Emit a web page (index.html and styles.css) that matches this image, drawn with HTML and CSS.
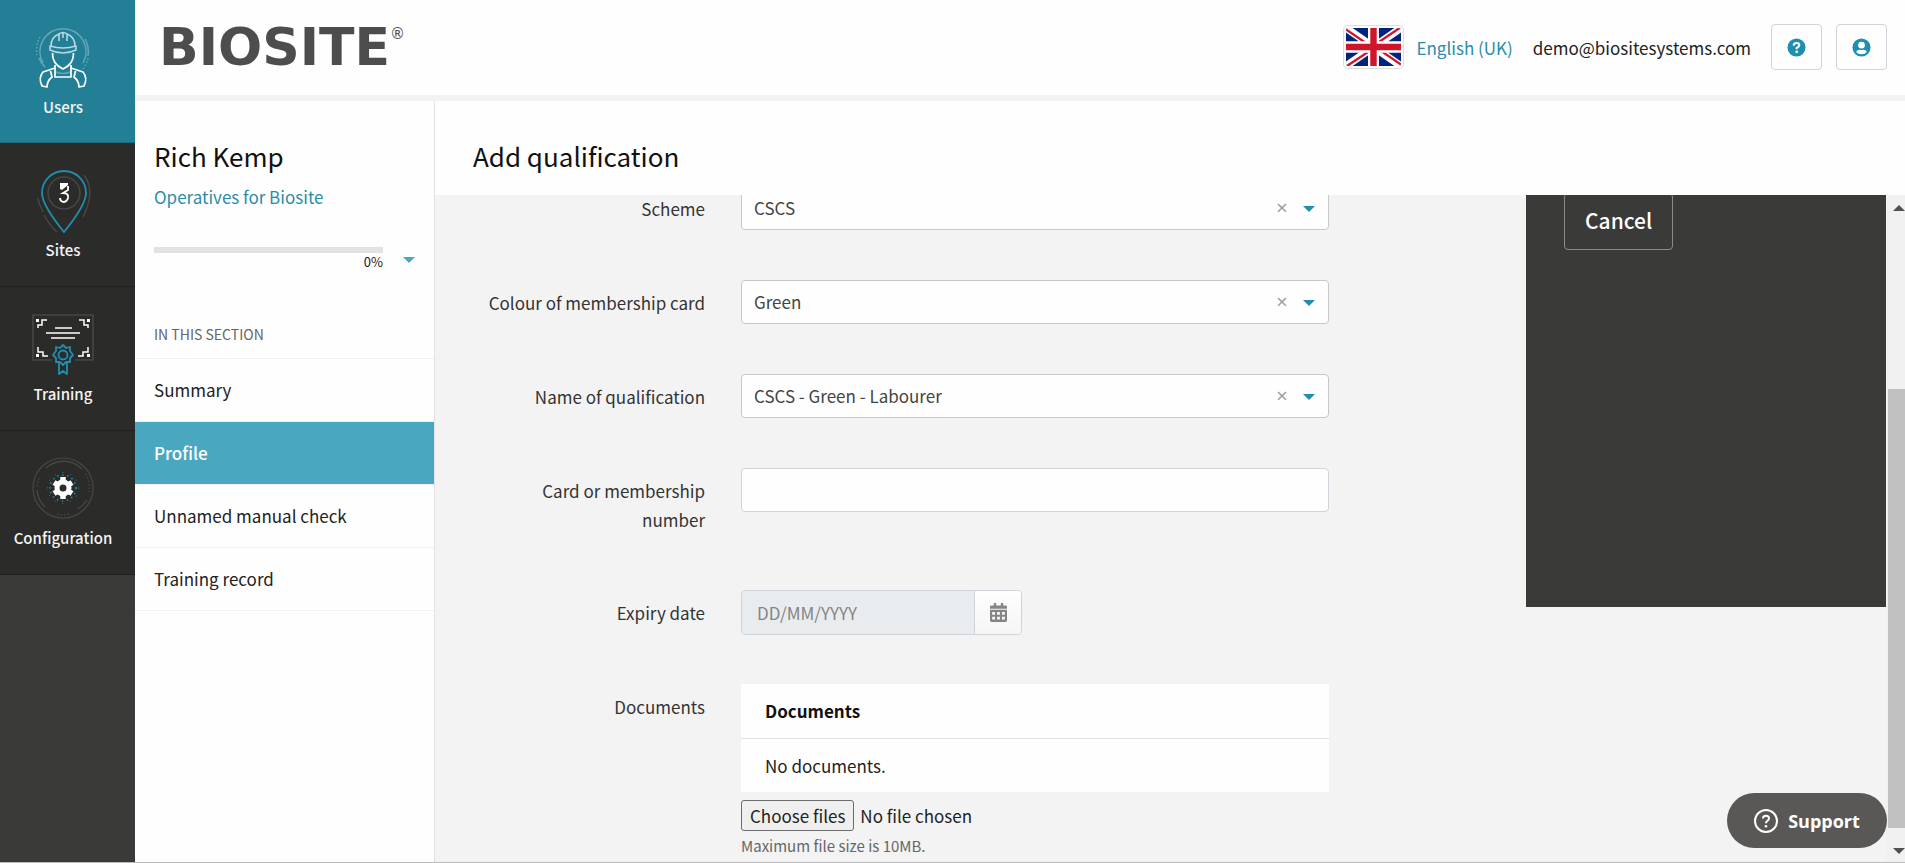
FILE: index.html
```html
<!DOCTYPE html>
<html lang="en">
<head>
    <meta charset="UTF-8">
    <meta name="viewport" content="width=device-width, initial-scale=1.0">
    <title>Add qualification - Biosite</title>

    <link rel="stylesheet" href="styles.css">
</head>

<body>
    <!-- Main navigation -->
    <nav class="main-nav">
        <a href="#" class="nav-item active">
            <svg class="nav-icon" viewBox="0 0 64 64" fill="none" stroke="#fff">
                <g stroke-width="1.5" opacity="0.3">
                    <path d="M12 37A23 23 0 1 1 52 37"/>
                    <path d="M54 13A26 26 0 0 1 57 30"/>
                    <path d="M8 32A26 26 0 0 0 14 41"/>
                    <path d="M9 11A27 27 0 0 0 6 29M57 32A27 27 0 0 1 51 44" stroke-dasharray="1.5 2"/>
                    <path d="M25 46Q32 49 39 46"/>
                </g>
                <g stroke="#b5d8e2" stroke-width="1.6" stroke-linejoin="round">
                    <path d="M20 20Q20 11 28 8M44 20Q44 11 36 8M28 15V8Q32 5 36 8V15M32 7V12"/>
                    <path d="M19 20Q32 24 45 20V24Q32 30 19 24Z"/>
                </g>
                <g stroke-width="1.7" stroke-linejoin="round">
                    <path d="M21.500 27Q21 38 32 43Q43 38 42.500 27"/>
                    <path d="M24 39V42L12 46Q7 52 11 60L16 61Q16 55 21 51L19 43M40 39V42L52 46Q57 52 53 60L48 61Q48 55 43 51L45 43"/>
                    <path d="M24 42V51H40V42"/>
                </g>
            </svg>
            <span>Users</span>
        </a>
        <a href="#" class="nav-item">
            <svg class="nav-icon" viewBox="0 0 64 64" fill="none">
                <path d="M33 63Q11 36 11 24A22 22 0 0 1 55 24Q55 36 33 63Z" stroke="#1f8fb0" stroke-width="1.8"/>
                <circle cx="33" cy="24" r="16" stroke="#474745" stroke-width="1.5"/>
                <path d="M53 6Q65 22 52 48M7 29Q8 35 12 43M13 46Q18 56 26 63" stroke="#474745" stroke-width="1.5"/>
                <path d="M29 14H37V16L31 21L29 20Z" fill="#fff"/>
                <path d="M37 17V21L32 24Q38 24 37 29Q36 33 32 33Q29 32 29 29" stroke="#fff" stroke-width="1.8"/>
            </svg>
            <span>Sites</span>
        </a>
        <a href="#" class="nav-item">
            <svg class="nav-icon" viewBox="0 0 64 64" fill="none">
                <path d="M21 47H2V2H62V47H44" stroke="#474745" stroke-width="1.600"/>
                <path d="M7 15V12H11V7H16M57 15V12H53V7H48M7 34V39H12V43H17M57 34V39H52V43H47" stroke="#fff" stroke-width="1.500"/>
                <path d="M5 6H8V9H5ZM56 6H59V9H56ZM5 41H8V44H5ZM56 41H59V44H56Z" fill="#fff"/>
                <path d="M24 15H41M15 20H49M20 25H44" stroke="#fff" stroke-width="1.6"/>
                <g stroke="#1f8fb0" stroke-width="1.8" stroke-linejoin="round">
                    <path d="M32 32L35 35L39 34L39 38L42 42L39 45L39 49L35 49L32 52L29 49L25 49L25 45L22 42L25 38L25 34L29 35Z"/>
                    <circle cx="32" cy="42" r="4.5"/>
                    <path d="M28 50V61L32 58L36 61V50"/>
                </g>
            </svg>
            <span>Training</span>
        </a>
        <a href="#" class="nav-item">
            <svg class="nav-icon" viewBox="0 0 64 64" fill="none">
                <circle cx="32" cy="31" r="30" stroke="#474745" stroke-width="1.2"/>
                <path d="M15 11A26 26 0 0 1 51 12M6 33A26 26 0 0 0 14 50M56 43A26 26 0 0 1 47 52" stroke="#474745" stroke-width="1.4"/>
                <path d="M8 21A26 26 0 0 0 6 30M55 17A27 27 0 0 1 58 35M26 57Q32 59 38 57" stroke="#474745" stroke-width="1.5" stroke-dasharray="1.500 2"/>
                <circle cx="32" cy="31" r="13" stroke="#1f8fb0" stroke-width="1.5" stroke-dasharray="1.5 3.5"/>
                <circle cx="32" cy="31" r="15.500" stroke="#1f8fb0" stroke-width="1" stroke-dasharray="1 7"/>
                <circle cx="32" cy="31" r="6" stroke="#fff" stroke-width="5"/>
                <path d="M32 25V20M32 37V42M37 28L41 25.500M27 34L23 36.500M27 28L23 25.500M37 34L41 36.500" stroke="#fff" stroke-width="5.5"/>
            </svg>
            <span>Configuration</span>
        </a>
    </nav>

    <div class="page">
        <!-- Top bar -->
        <header class="top-bar">
            <a href="#" class="logo">BIOSITE<sup>®</sup></a>
            <div class="account">
                <a href="#" class="language">
                    <svg class="flag" viewBox="0 0 60 40" preserveAspectRatio="none">
                        <path fill="#00247d" d="M0 0H60V40H0Z"/>
                        <path stroke="#fff" stroke-width="8" d="M0 0L60 40M60 0L0 40"/>
                        <path stroke="#cf142b" stroke-width="2.5" d="M0 1.500L28 20M32 20L60 38.500M58.500 0L31 18M29 22L1 40"/>
                        <path stroke="#fff" stroke-width="12" d="M30 0V40M0 20H60"/>
                        <path stroke="#cf142b" stroke-width="7" d="M30 0V40M0 20H60"/>
                    </svg>
                    English (UK)
                </a>
                <span class="email">demo@biositesystems.com</span>
                <button type="button" class="icon-button" aria-label="Help">
                    <svg viewBox="0 0 20 20">
                        <circle cx="10" cy="10" r="9.500" fill="#1f8fb0"/>
                        <path d="M7 8Q7.200 5.200 10 5.200Q13 5.200 13 7.700Q13 9.300 10.200 10.500V11.800" fill="none" stroke="#fff" stroke-width="2.200"/>
                        <circle cx="10.200" cy="14.600" r="1.400" fill="#fff"/>
                    </svg>
                </button>
                <button type="button" class="icon-button" aria-label="Account">
                    <svg viewBox="0 0 20 20">
                        <circle cx="10" cy="10" r="9.500" fill="#1f8fb0"/>
                        <circle cx="10" cy="7.500" r="3.500" fill="#fff"/>
                        <path d="M4.300 14.800Q5.500 12.300 8 12.300Q10 13 12 12.300Q14.500 12.300 15.700 14.800Q13.500 17.200 10 17.200Q6.500 17.200 4.300 14.800Z" fill="#fff"/>
                    </svg>
                </button>
            </div>
        </header>

        <div class="columns">
            <!-- Section menu -->
            <aside class="sidebar">
                <h2>Rich Kemp</h2>
                <a href="#" class="company">Operatives for Biosite</a>
                <div class="completion">
                    <div class="bar-wrap">
                        <div class="bar"></div>
                        <span>0%</span>
                    </div>
                    <button type="button" class="caret" aria-label="Show details"></button>
                </div>
                <h3>IN THIS SECTION</h3>
                <ul class="section-menu">
                    <li><a href="#">Summary</a></li>
                    <li><a href="#" class="current">Profile</a></li>
                    <li><a href="#">Unnamed manual check</a></li>
                    <li><a href="#">Training record</a></li>
                </ul>
            </aside>

            <main class="main">
                <h1>Add qualification</h1>
                <div class="viewport">
                    <!-- Qualification form -->
                    <form class="form">
                        <label for="scheme">Scheme</label>
                        <div class="select">
                            <select id="scheme" name="scheme"><option>CSCS</option></select>
                            <button type="button" aria-label="Clear scheme">×</button>
                        </div>

                        <label for="colour">Colour of membership card</label>
                        <div class="select">
                            <select id="colour" name="colour"><option>Green</option></select>
                            <button type="button" aria-label="Clear colour">×</button>
                        </div>

                        <label for="qualification">Name of qualification</label>
                        <div class="select">
                            <select id="qualification" name="qualification"><option>CSCS - Green - Labourer</option></select>
                            <button type="button" aria-label="Clear qualification">×</button>
                        </div>

                        <label for="cardNumber">Card or membership number</label>
                        <input type="text" id="cardNumber" name="cardNumber" class="text-input">

                        <label for="expiry">Expiry date</label>
                        <div class="date-group">
                            <input type="text" id="expiry" name="expiry" placeholder="DD/MM/YYYY">
                            <button type="button" aria-label="Pick a date">
                                <svg viewBox="0 0 18 20" fill="#858585">
                                    <path d="M4 0H6.500V2.500H11.500V0H14V2.500H16.500Q18 2.500 18 4V6H0V4Q0 2.500 1.500 2.500H4Z"/>
                                    <path fill-rule="evenodd" d="M0 7.200H18V18.500Q18 20 16.500 20H1.500Q0 20 0 18.500ZM2.300 9.500V12.300H5.300V9.500ZM7.500 9.500V12.300H10.500V9.500ZM12.700 9.500V12.300H15.700V9.500ZM2.300 14.500V17.300H5.300V14.500ZM7.500 14.500V17.300H10.500V14.500ZM12.700 14.500V17.300H15.700V14.500Z"/>
                                </svg>
                            </button>
                        </div>

                        <label for="files">Documents</label>
                        <div>
                            <table class="documents">
                                <thead>
                                    <tr><th>Documents</th></tr>
                                </thead>
                                <tbody>
                                    <tr><td>No documents.</td></tr>
                                </tbody>
                            </table>
                            <div class="file-picker">
                                <input type="file" id="files" name="files" multiple>
                                <label for="files">Choose files</label>
                                <span>No file chosen</span>
                            </div>
                            <p class="hint">Maximum file size is 10MB.</p>
                        </div>
                    </form>

                    <div class="actions">
                        <button type="button">Cancel</button>
                    </div>

                    <div class="scrollbar">
                        <i class="up"></i>
                        <div class="thumb"></div>
                        <i class="down"></i>
                    </div>
                </div>
            </main>
        </div>
    </div>

    <!-- Floating support button -->
    <button type="button" class="support">
        <svg viewBox="0 0 24 24" fill="none" stroke="#fff">
            <circle cx="12" cy="12" r="11" stroke-width="2"/>
            <path d="M9 9.500Q9 6.800 12 6.800Q15 6.800 15 9.300Q15 10.800 13.300 11.800Q12 12.600 12 14.300" stroke-width="2"/>
            <circle cx="12" cy="17.200" r="1.300" fill="#fff" stroke="none"/>
        </svg>
        Support
    </button>
</body>

</html>
```

FILE: styles.css
```css
* {
    box-sizing: border-box;
}

body {
    margin: 0;
    height: 100vh;
    display: flex;
    overflow: hidden;
    font-family: "Noto Sans CJK SC", "Open Sans", sans-serif;
    font-size: 17px;
    line-height: 29px;
    color: #222;
    background-color: #fefefe;
    border-bottom: 1px solid #bbb;
}

a {
    color: #2c8ca8;
    text-decoration: none;
}

button,
input,
select {
    font-family: inherit;
    font-size: inherit;
    color: inherit;
}

h1,
h2,
h3,
p,
ul {
    margin: 0;
    padding: 0;
}

/* Main navigation */
.main-nav {
    flex: 0 0 135px;
    background-color: #3a3a38;
}

.nav-item {
    display: flex;
    flex-direction: column;
    align-items: center;
    height: 144px;
    padding: 26px 9px 0 0;
    background-color: #2b2b29;
    border-bottom: 1px solid #20201f;
    color: #f4f4f4;
    font-size: 15px;
    font-weight: 500;
}

.nav-item.active {
    height: 143px;
    background-color: #237f96;
    border-bottom-color: #1c6a7e;
}

.nav-icon {
    width: 64px;
    height: 64px;
    margin-bottom: 2px;
}

.page {
    flex: 1;
    min-width: 0;
    display: flex;
    flex-direction: column;
}

/* Top bar */
.top-bar {
    flex: 0 0 101px;
    display: flex;
    justify-content: space-between;
    padding: 0 18px 0 24px;
    border-bottom: 6px solid #f3f3f3;
}

.logo {
    font-family: "DejaVu Sans", sans-serif;
    font-size: 52px;
    font-weight: bold;
    line-height: 94px;
    color: #4d4d4d;
}

.logo sup {
    font-size: 15px;
    font-weight: normal;
    line-height: 0;
    vertical-align: 26px;
}

.account {
    display: flex;
    align-items: center;
    padding-bottom: 1px;
}

.language {
    display: flex;
    align-items: center;
    gap: 12px;
}

.flag {
    width: 61px;
    height: 44px;
    padding: 2px;
    border: 1px solid #ddd;
    border-radius: 5px;
}

.email {
    margin: 0 20px;
}

.icon-button {
    width: 51px;
    height: 46px;
    padding: 0;
    background: none;
    border: 1px solid #ced4da;
    border-radius: 4px;
}

.icon-button + .icon-button {
    margin-left: 14px;
}

.icon-button svg {
    display: block;
    width: 19px;
    height: 19px;
    margin: 0 auto;
}

.columns {
    flex: 1;
    min-height: 0;
    display: flex;
}

/* Section menu */
.sidebar {
    flex: 0 0 300px;
    padding-top: 35px;
    border-right: 1px solid #e2e2e2;
}

.sidebar h2,
.main h1 {
    font-size: 26px;
    font-weight: normal;
    line-height: 40px;
    color: #111;
}

.sidebar h2,
.sidebar h3,
.company {
    padding-left: 19px;
}

.company {
    display: block;
    margin-top: 6px;
}

.completion {
    display: flex;
    gap: 20px;
    margin: 36px 18px 0 19px;
}

.bar-wrap {
    width: 229px;
    font-size: 13px;
    line-height: 18px;
    text-align: right;
}

.bar {
    height: 6px;
    background-color: #e2e2e2;
}

.caret {
    align-self: flex-start;
    width: 12px;
    height: 6px;
    margin-top: 10px;
    padding: 0;
    border: none;
    background-color: #4aa7c0;
    clip-path: polygon(0 0, 100% 0, 50% 100%);
}

.sidebar h3 {
    margin-top: 53px;
    font-size: 14px;
    font-weight: normal;
    line-height: 20px;
    color: #666;
}

.section-menu {
    margin-top: 14px;
    list-style: none;
    border-top: 1px solid #f1f1f1;
}

.section-menu a {
    display: block;
    padding: 16px 19px 17px;
    border-bottom: 1px solid #f1f1f1;
    color: #222;
}

.section-menu .current {
    background-color: #4aa7c0;
    color: #fff;
    font-weight: 500;
}

.main {
    flex: 1;
    min-width: 0;
    display: flex;
    flex-direction: column;
}

.main h1 {
    padding: 35px 38px 19px;
}

.viewport {
    flex: 1;
    min-height: 0;
    display: flex;
    align-items: flex-start;
    overflow: hidden;
    background-color: #f3f3f3;
}

/* Qualification form */
.form {
    flex: 1;
    display: grid;
    grid-template-columns: 11fr 28fr;
    gap: 50px 36px;
    margin-top: -9px;
    padding: 0 197px 0 39px;
}

.form > label {
    padding: 8px 0 6px 8px;
    text-align: right;
    color: #333;
}

.select {
    position: relative;
}

.select::after {
    content: "";
    position: absolute;
    top: 20px;
    right: 14px;
    width: 12px;
    height: 6px;
    background-color: #1f8fb0;
    clip-path: polygon(0 0, 100% 0, 50% 100%);
    pointer-events: none;
}

.select select {
    appearance: none;
    width: 100%;
    height: 44px;
    padding: 0 80px 2px 12px;
    background-color: #fefefe;
    border: 1px solid #c8c8c8;
    border-radius: 4px;
    color: #444;
}

.select button {
    position: absolute;
    top: 12px;
    right: 37px;
    width: 20px;
    padding: 0;
    border: none;
    background: none;
    font-family: "Open Sans", sans-serif;
    font-size: 20px;
    line-height: 20px;
    color: #999;
}

.text-input {
    width: 100%;
    height: 44px;
    background-color: #fefefe;
    border: 1px solid #ced4da;
    border-radius: 4px;
}

.date-group {
    display: flex;
    width: 281px;
    height: 45px;
    border: 1px solid #ced4da;
    border-radius: 4px;
    overflow: hidden;
    margin-bottom: -1px;
}

.date-group input {
    flex: 1;
    min-width: 0;
    padding: 0 15px;
    border: none;
    background-color: #e9ecef;
}

.date-group input::placeholder {
    color: #858585;
}

.date-group button {
    width: 47px;
    padding: 0;
    border: none;
    border-left: 1px solid #ced4da;
    background-image: linear-gradient(#fefefe, #f5f5f5);
}

.date-group svg {
    display: block;
    width: 17px;
    height: 19px;
    margin: 0 auto;
}

.documents {
    width: 100%;
    border-collapse: collapse;
    background-color: #fefefe;
}

.documents th,
.documents td {
    height: 54px;
    padding: 0 24px;
    text-align: left;
}

.documents th {
    color: #111;
    border-bottom: 1px solid #dee2e6;
}

.file-picker {
    position: relative;
    display: flex;
    align-items: center;
    gap: 6px;
    margin-top: 8px;
}

/* The label stands in for the native file button */
.file-picker input {
    position: absolute;
    width: 1px;
    height: 1px;
    opacity: 0;
}

.file-picker label {
    padding: 0 8px;
    background-color: #efefef;
    border: 1px solid #6b6b6b;
    border-radius: 3px;
}

.hint {
    font-size: 15px;
    color: #666;
}

/* Dark panel with the form buttons */
.actions {
    flex: 0 0 360px;
    height: 414px;
    margin-top: -2px;
    padding: 0 38px;
    background-color: #3a3a38;
}

.actions button {
    display: block;
    height: 57px;
    padding: 0 20px 3px;
    background: none;
    border: 1px solid #8a8a88;
    border-radius: 4px;
    font-size: 21px;
    font-weight: 500;
    color: #fff;
}

.scrollbar {
    align-self: stretch;
    flex: 0 0 19px;
    display: flex;
    flex-direction: column;
    padding: 10px 0 8px 2px;
    background-color: #f1f1f1;
}

.scrollbar i {
    width: 12px;
    height: 6px;
    margin-left: 5px;
    background-color: #505050;
    clip-path: polygon(0 100%, 100% 100%, 50% 0);
}

.scrollbar .down {
    clip-path: polygon(0 0, 100% 0, 50% 100%);
}

/* The thumb sits near the end of its track */
.thumb {
    flex: 1;
    margin: 178px 0 20px;
    background-color: #c1c1c1;
}

/* Floating support button */
.support {
    position: fixed;
    right: 18px;
    bottom: 15px;
    display: flex;
    align-items: center;
    justify-content: center;
    gap: 10px;
    width: 160px;
    height: 55px;
    border: none;
    border-radius: 28px;
    background-color: #595856;
    font-family: "Open Sans", sans-serif;
    font-size: 18px;
    font-weight: bold;
    color: #fff;
}

.support svg {
    width: 24px;
    height: 24px;
}
```
